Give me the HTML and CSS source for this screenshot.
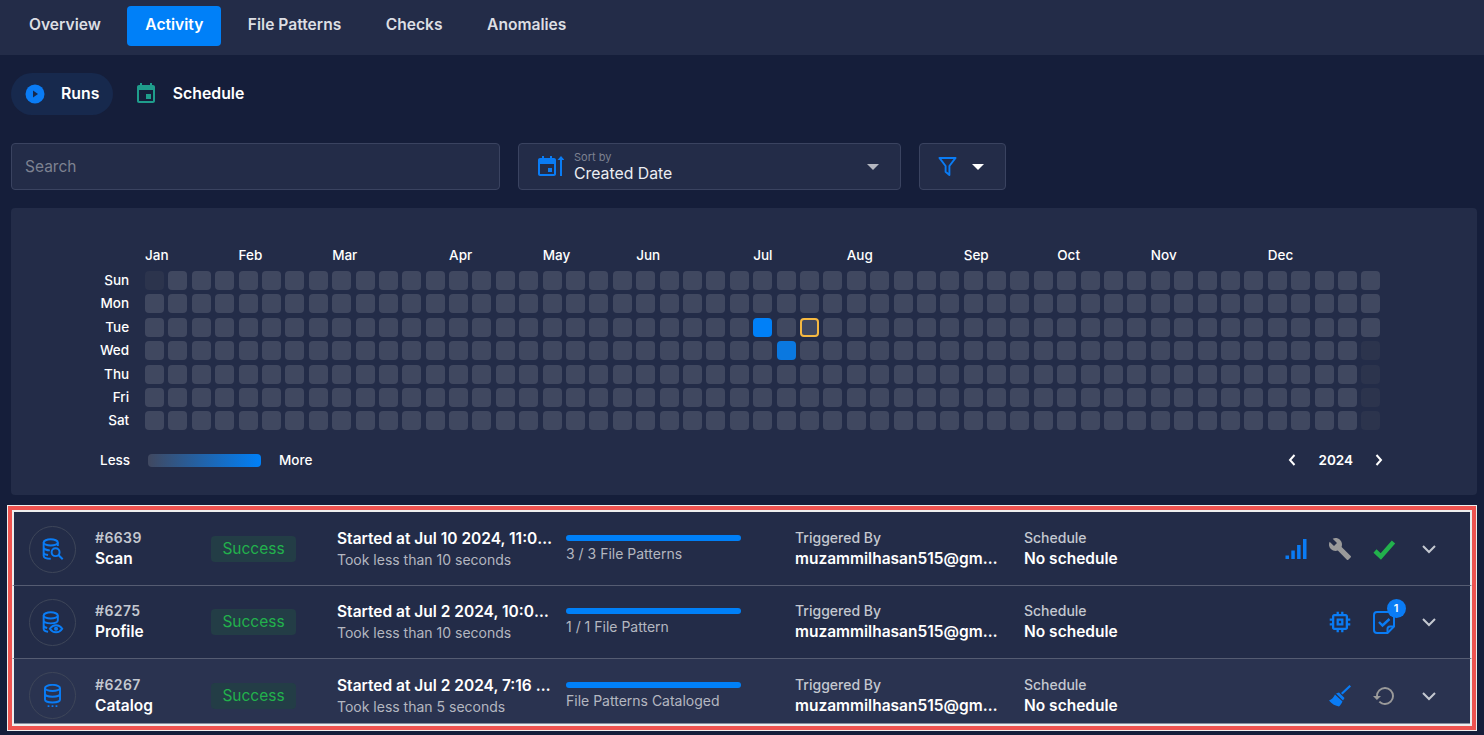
FILE: index.html
```html
<!DOCTYPE html>
<html>
    <head>
        <title>Activity</title>
        <meta name="viewport" content="width=device-width, initial-scale=1.0">
        <link rel="stylesheet" href="styles.css">
    </head>
    <body>
        <nav class="tabs">
            <a class="tab">Overview</a>
            <a class="tab active">Activity</a>
            <a class="tab">File Patterns</a>
            <a class="tab">Checks</a>
            <a class="tab">Anomalies</a>
        </nav>

        <div class="subtabs">
            <a class="subtab selected">
                <svg class="sub-icon" viewBox="0 0 24 24"><circle cx="12" cy="12" r="9.500" fill="#0a7cf5"/><path d="M10 8.500l5 3.500-5 3.500z" fill="#17294d"/></svg>
                Runs
            </a>
            <a class="subtab">
                <svg class="sub-icon" viewBox="0 0 24 24"><path fill="#1f9d8c" d="M17 12h-5v5h5v-5zM16 1v2H8V1H6v2H5c-1.110 0-1.990.9-1.990 2L3 19c0 1.100.89 2 2 2h14c1.100 0 2-.9 2-2V5c0-1.100-.9-2-2-2h-1V1h-2zm3 18H5V8h14v11z"/></svg>
                Schedule
            </a>
        </div>

        <div class="filters">
            <div class="field search">Search</div>
            <div class="field sort">
                <svg class="sort-icon" viewBox="0 0 26 22"><path fill="#0a7cf5" d="M4 0h2v2h6V0h2v2h2c1.100 0 2 .9 2 2v14c0 1.100-.9 2-2 2H2c-1.100 0-2-.9-2-2V4c0-1.100.9-2 2-2h2zM2 8v10h14V8zM10 12h4v4h-4z"/><path fill="#0a7cf5" d="M22 4v16h2V4h2.500L23 0l-3.500 4z"/></svg>
                <div class="sort-text">
                    <span class="sort-label">Sort by</span>
                    <span class="sort-value">Created Date</span>
                </div>
                <span class="caret grey"></span>
            </div>
            <div class="field filter">
                <svg class="filter-icon" viewBox="0 0 20 22"><path fill="none" stroke="#0a7cf5" stroke-width="2" stroke-linejoin="round" d="M1.500 2h17l-6.500 8.500V20l-4-3.500v-6z"/></svg>
                <span class="caret"></span>
            </div>
        </div>

        <section class="heatmap">
            <div class="months">
                <span style="grid-column-start: 1">Jan</span>
                <span style="grid-column-start: 5">Feb</span>
                <span style="grid-column-start: 9">Mar</span>
                <span style="grid-column-start: 14">Apr</span>
                <span style="grid-column-start: 18">May</span>
                <span style="grid-column-start: 22">Jun</span>
                <span style="grid-column-start: 27">Jul</span>
                <span style="grid-column-start: 31">Aug</span>
                <span style="grid-column-start: 36">Sep</span>
                <span style="grid-column-start: 40">Oct</span>
                <span style="grid-column-start: 44">Nov</span>
                <span style="grid-column-start: 49">Dec</span>
            </div>
            <div class="calendar">
                <div class="days">
                    <span>Sun</span><span>Mon</span><span>Tue</span><span>Wed</span><span>Thu</span><span>Fri</span><span>Sat</span>
                </div>
                <div class="cells" id="cells"></div>
            </div>
            <div class="legend">
                <span class="legend-less">Less</span>
                <div class="legend-bar"></div>
                <span>More</span>
                <div class="year">
                    <svg class="year-arrow" viewBox="0 0 10 14"><path d="M7.500 2L3 7l4.500 5" fill="none" stroke="#fff" stroke-width="2"/></svg>
                    <span>2024</span>
                    <svg class="year-arrow" viewBox="0 0 10 14"><path d="M2.500 2L7 7l-4.500 5" fill="none" stroke="#fff" stroke-width="2"/></svg>
                </div>
            </div>
        </section>

        <div class="highlight">
            <div class="run first">
                <div class="type-icon">
                    <svg viewBox="0 0 26 26" fill="none" stroke="#0a7cf5" stroke-width="2.200"><ellipse cx="11" cy="5" rx="8" ry="3.500"/><path d="M3 5v15c0 2 3.500 3.500 8 3.500M19 5v4M3 10.500c0 2 3.500 3.500 7 3.500M3 16c0 1.600 2 2.800 5 3.300"/><circle cx="16.500" cy="16" r="4.500"/><path d="M20 19.500l4.500 4.500"/></svg>
                </div>
                <div class="stack">
                    <span class="run-id">#6639</span>
                    <span class="run-name">Scan</span>
                </div>
                <div><span class="badge">Success</span></div>
                <div class="stack">
                    <span class="run-title">Started at Jul 10 2024, 11:05:32 PM</span>
                    <span class="run-sub">Took less than 10 seconds</span>
                </div>
                <div class="progress">
                    <div class="bar"></div>
                    <span class="run-sub">3 / 3 File Patterns</span>
                </div>
                <div class="stack">
                    <span class="label">Triggered By</span>
                    <span class="value user">muzammilhasan515@gmail.com</span>
                </div>
                <div class="stack">
                    <span class="label">Schedule</span>
                    <span class="value">No schedule</span>
                </div>
                <div class="actions">
                    <svg class="action" viewBox="0 0 24 24" fill="#0a7cf5"><rect x="1.500" y="18.500" width="3.500" height="3.500"/><rect x="7.300" y="13.500" width="3.500" height="8.500"/><rect x="13.100" y="8" width="3.500" height="14"/><rect x="19" y="2" width="3.500" height="20"/></svg>
                    <svg class="action" viewBox="0 0 24 24" fill="#9a9a9a"><path d="M22.700 19l-9.100-9.100c.9-2.300.4-5-1.500-6.900-2-2-5-2.400-7.400-1.300L9 6 6 9 1.600 4.700C.4 7.100.9 10.100 2.900 12.100c1.900 1.900 4.600 2.400 6.900 1.500l9.100 9.100c.4.4 1 .4 1.400 0l2.300-2.300c.5-.4.5-1.100.1-1.400z"/></svg>
                    <svg class="action" viewBox="0 0 24 24"><path d="M3 14l5.800 5.500L21.500 5" fill="none" stroke="#22b14c" stroke-width="4.500"/></svg>
                    <svg class="chevron" viewBox="0 0 16 10"><path d="M2 2l6 6 6-6" fill="none" stroke="#c4c8d0" stroke-width="2"/></svg>
                </div>
            </div>

            <div class="run">
                <div class="type-icon">
                    <svg viewBox="0 0 26 26" fill="none" stroke="#0a7cf5" stroke-width="2.200"><ellipse cx="11" cy="5" rx="8" ry="3.500"/><path d="M3 5v15c0 1.800 2 3 5 3.400M19 5v6M3 10.500c0 2 3.500 3.500 8 3.500s8-1.500 8-3.500M3 16c0 1.500 1.500 2.600 4 3.200"/><path d="M10 20c2-3 4.500-4 7-4s5 1 7 4c-2 3-4.500 4-7 4s-5-1-7-4z"/><circle cx="17" cy="20" r="1.200"/></svg>
                </div>
                <div class="stack">
                    <span class="run-id">#6275</span>
                    <span class="run-name">Profile</span>
                </div>
                <div><span class="badge">Success</span></div>
                <div class="stack">
                    <span class="run-title">Started at Jul 2 2024, 10:01 :47 PM</span>
                    <span class="run-sub">Took less than 10 seconds</span>
                </div>
                <div class="progress">
                    <div class="bar"></div>
                    <span class="run-sub">1 / 1 File Pattern</span>
                </div>
                <div class="stack">
                    <span class="label">Triggered By</span>
                    <span class="value user">muzammilhasan515@gmail.com</span>
                </div>
                <div class="stack">
                    <span class="label">Schedule</span>
                    <span class="value">No schedule</span>
                </div>
                <div class="actions">
                    <svg class="action" viewBox="1.500 1.500 21 21" fill="#0a7cf5"><path d="M15 9H9v6h6V9zm-2 4h-2v-2h2v2zm8-2V9h-2V7c0-1.100-.9-2-2-2h-2V3h-2v2h-2V3H9v2H7c-1.100 0-2 .9-2 2v2H3v2h2v2H3v2h2v2c0 1.100.9 2 2 2h2v2h2v-2h2v2h2v-2h2c1.100 0 2-.9 2-2v-2h2v-2h-2v-2h2zm-4 6H7V7h10v10z"/></svg>
                    <div class="checks">
                        <svg class="action" viewBox="0 0 24 24" fill="none" stroke="#0a7cf5" stroke-width="2"><path d="M5 2h14c1.700 0 3 1.300 3 3v11.500L15.500 23H5c-1.700 0-3-1.300-3-3V5c0-1.700 1.300-3 3-3z" stroke-linejoin="round"/><path d="M22 16.500h-4c-1.500 0-2.500 1-2.500 2.500v4"/><path d="M7 12l3.500 3.500L17.500 9" stroke-width="2.400"/></svg>
                        <span class="count">1</span>
                    </div>
                    <svg class="chevron" viewBox="0 0 16 10"><path d="M2 2l6 6 6-6" fill="none" stroke="#c4c8d0" stroke-width="2"/></svg>
                </div>
            </div>

            <div class="run hovered">
                <div class="type-icon">
                    <svg viewBox="0 0 26 26" fill="none" stroke="#0a7cf5" stroke-width="2.200"><ellipse cx="13" cy="4.500" rx="8.500" ry="3.500"/><path d="M4.500 4.500v13c0 2 3.800 3.500 8.500 3.500s8.500-1.500 8.500-3.500v-13M4.500 11c0 2 3.800 3.500 8.500 3.500s8.500-1.500 8.500-3.500"/><path d="M7.500 25h2M12 25h2M16.500 25h2" stroke-width="1.800"/></svg>
                </div>
                <div class="stack">
                    <span class="run-id">#6267</span>
                    <span class="run-name">Catalog</span>
                </div>
                <div><span class="badge">Success</span></div>
                <div class="stack">
                    <span class="run-title">Started at Jul 2 2024, 7:16 PM (UTC)</span>
                    <span class="run-sub">Took less than 5 seconds</span>
                </div>
                <div class="progress">
                    <div class="bar"></div>
                    <span class="run-sub">File Patterns Cataloged</span>
                </div>
                <div class="stack">
                    <span class="label">Triggered By</span>
                    <span class="value user">muzammilhasan515@gmail.com</span>
                </div>
                <div class="stack">
                    <span class="label">Schedule</span>
                    <span class="value">No schedule</span>
                </div>
                <div class="actions">
                    <svg class="action" viewBox="0 0 24 24" fill="#0a7cf5"><path d="M23 2.500l-8.500 8-1.500-1.500 8.500-8z"/><path d="M11 8.500l5.500 5.500-1.500 2.500L8 9.500z"/><path d="M7 10.500l7.500 7c-1 2-2 3.800-3.500 5-3-.5-7.500-2.500-10-6 3-1 4.500-3 6-6z"/></svg>
                    <svg class="action" viewBox="0 0 24 24" fill="#9a9a9a"><path d="M13 3a9 9 0 0 0-9 9H1l3.890 3.890.07.14L9 12H6c0-3.870 3.130-7 7-7s7 3.130 7 7-3.130 7-7 7c-1.930 0-3.680-.79-4.940-2.060l-1.420 1.420A8.954 8.954 0 0 0 13 21a9 9 0 0 0 0-18z"/></svg>
                    <svg class="chevron" viewBox="0 0 16 10"><path d="M2 2l6 6 6-6" fill="none" stroke="#c4c8d0" stroke-width="2"/></svg>
                </div>
            </div>
        </div>

        <script src="calendar.js"></script>
    </body>
</html>
```

FILE: styles.css
```css
*{
    margin: 0;
    padding: 0;
    box-sizing: border-box;
}

body{
    width: 1484px;
    height: 735px;
    overflow: hidden;
    background-color: #151e3a;
    font-family: "Inter", "Noto Sans", sans-serif;
    color: #fff;
}

/* top tabs */
.tabs{
    height: 55px;
    display: flex;
    align-items: flex-start;
    gap: 8.5px;
    padding: 6px 0 0 11px;
    background-color: #232c48;
}

.tab{
    height: 40px;
    line-height: 38px;
    padding: 0 18px;
    border-radius: 4px;
    font-size: 15.6px;
    font-weight: 600;
    color: #dcdee3;
}

.tab.active{
    background-color: #0080f8;
    color: #fff;
}

/* runs / schedule */
.subtabs{
    display: flex;
    gap: 9.5px;
    margin: 18px 0 28px 11px;
}

.subtab{
    height: 42px;
    display: flex;
    align-items: center;
    gap: 14.5px;
    padding: 0 14px 2px 11.5px;
    border-radius: 21px;
    font-size: 15.8px;
    font-weight: 600;
}

.subtab.selected{
    background-color: #17294d;
}

.sub-icon{
    width: 24px;
    height: 24px;
    margin-top: 2px;
}

/* search row */
.filters{
    display: flex;
    gap: 18px;
    margin-left: 11px;
}

.field{
    height: 47px;
    display: flex;
    align-items: center;
    background-color: #232c48;
    border: 1px solid #3a4360;
    border-radius: 4px;
}

.search{
    width: 489px;
    padding-left: 13px;
    font-size: 15.5px;
    color: #7d8291;
}

.sort{
    width: 383px;
    padding: 0 21px 0 19px;
}

.sort-icon{
    width: 26px;
    height: 22px;
    margin-right: 10px;
}

.sort-text{
    flex: 1;
    display: flex;
    flex-direction: column;
}

.sort-label{
    font-size: 11px;
    line-height: 13px;
    color: #7d8291;
}

.sort-value{
    font-size: 15.8px;
    line-height: 19px;
    color: #eceef2;
}

.caret{
    width: 0;
    height: 0;
    border-left: 6px solid transparent;
    border-right: 6px solid transparent;
    border-top: 6px solid #fff;
}

.caret.grey{
    border-top-color: #b4b7c0;
}

.filter{
    width: 87px;
    padding-left: 18px;
    gap: 15px;
}

.filter-icon{
    width: 19px;
    height: 21px;
}

/* calendar */
.heatmap{
    width: 1466px;
    height: 287px;
    margin: 18px 0 0 11px;
    padding: 38px 0 0 89px;
    background-color: #232c48;
    border-radius: 4px;
    font-size: 13.5px;
    font-weight: 500;
}

.months{
    display: grid;
    grid-template-columns: repeat(53, 19px);
    column-gap: 4.4px;
    height: 18px;
    line-height: 18px;
    margin: 0 0 7px 45px;
}

.months span{
    white-space: nowrap;
}

.calendar{
    display: flex;
    gap: 16px;
}

.days{
    width: 29px;
    display: grid;
    grid-template-rows: repeat(7, 19px);
    row-gap: 4.4px;
    line-height: 19px;
    text-align: right;
}

.cells{
    display: grid;
    grid-template-columns: repeat(53, 19px);
    grid-template-rows: repeat(7, 19px);
    gap: 4.4px;
    grid-auto-flow: column;
}

.cell{
    background-color: #404860;
    border-radius: 4px;
}

.cell.faint{
    background-color: #2c344d;
}

.cell.full{
    background-color: #0080f8;
}

.cell.high{
    background-color: #0a78e0;
}

.cell.today{
    border: 2px solid #f5b841;
}

.legend{
    display: flex;
    align-items: center;
    height: 20px;
    margin-top: 20px;
}

.legend-less{
    width: 30px;
}

.legend-bar{
    width: 113px;
    height: 13px;
    margin: 0 18px;
    border-radius: 4px;
    background: linear-gradient(90deg, #404860, #0080f8);
}

.year{
    display: flex;
    align-items: center;
    gap: 21px;
    margin: 0 93px 0 auto;
    font-weight: 600;
}

.year-arrow{
    width: 10px;
    height: 14px;
}

/* list of runs */
.highlight{
    width: 1470px;
    height: 226px;
    margin: 10px 0 0 7px;
    border: 1px solid #eee;
    background-color: #ef5350;
    padding: 4px;
}

.run{
    height: 73px;
    display: grid;
    grid-template-columns: 66px 116px 126px 229px 229px 229px 200px 1fr;
    align-items: center;
    padding-left: 15px;
    background-color: #232c48;
    border-left: 2px solid #eee;
    border-right: 2px solid #eee;
    border-bottom: 1px solid #555c72;
}

.run.first{
    height: 76px;
    padding-top: 1px;
    border-top: 2px solid #eee;
}

.run.hovered{
    height: 67px;
    padding-top: 8px;
    background-color: #2a3350;
    border-bottom: 2px solid #eee;
    box-shadow: inset 0 -1px 0 #8a8f9f;
}

.type-icon{
    width: 47px;
    height: 47px;
    display: flex;
    align-items: center;
    justify-content: center;
    border: 1px solid #3e4659;
    border-radius: 50%;
}

.type-icon svg{
    width: 23px;
    height: 23px;
}

.stack{
    display: flex;
    flex-direction: column;
    gap: 2px;
    min-width: 0;
}

.run-id{
    font-size: 14px;
    line-height: 18px;
    font-weight: 600;
    letter-spacing: 0.4px;
    color: #c4c8d0;
}

.run-name{
    font-size: 15.5px;
    line-height: 20px;
    font-weight: 600;
}

.badge{
    display: inline-block;
    width: 85px;
    height: 26px;
    line-height: 26px;
    text-align: center;
    border-radius: 4px;
    font-size: 15.5px;
    color: #22b14c;
    background-color: #233d46;
}

.run-title{
    width: 218px;
    font-size: 15.5px;
    line-height: 20px;
    font-weight: 600;
    white-space: nowrap;
    overflow: hidden;
    text-overflow: ellipsis;
}

.run-sub{
    font-size: 14px;
    line-height: 18px;
    color: #b4b7c0;
}

.progress{
    display: flex;
    flex-direction: column;
    gap: 4px;
}

.bar{
    width: 175px;
    height: 6px;
    border-radius: 3px;
    background-color: #0080f8;
}

.label{
    font-size: 14px;
    line-height: 18px;
    font-weight: 500;
    color: #c4c8d0;
}

.value{
    font-size: 15.5px;
    line-height: 20px;
    font-weight: 600;
}

.user{
    width: 209px;
    white-space: nowrap;
    overflow: hidden;
    text-overflow: ellipsis;
}

.actions{
    display: flex;
    align-items: center;
    justify-content: flex-end;
    gap: 20px;
    padding-right: 33.5px;
}

.action{
    width: 24px;
    height: 24px;
    display: block;
}

.chevron{
    width: 16px;
    height: 10px;
    margin-left: 5px;
}

.checks{
    position: relative;
    height: 24px;
}

.count{
    position: absolute;
    top: -11px;
    right: -10px;
    width: 19px;
    height: 19px;
    line-height: 19px;
    text-align: center;
    border-radius: 50%;
    font-size: 11px;
    font-weight: 600;
    background-color: #0a7cf5;
}
```

FILE: calendar.js
```js
// builds the year grid, 53 weeks of 7 days
const faint = ["0-0", "52-3", "52-4", "52-5", "52-6"];
const grid = document.getElementById("cells");

for (let week = 0; week < 53; week++) {
    for (let day = 0; day < 7; day++) {
        const cell = document.createElement("div");
        const key = week + "-" + day;
        cell.className = "cell";
        if (faint.includes(key)) cell.classList.add("faint");
        if (key == "26-2") cell.classList.add("full");
        if (key == "27-3") cell.classList.add("high");
        if (key == "28-2") cell.classList.add("today");
        grid.appendChild(cell);
    }
}
```
